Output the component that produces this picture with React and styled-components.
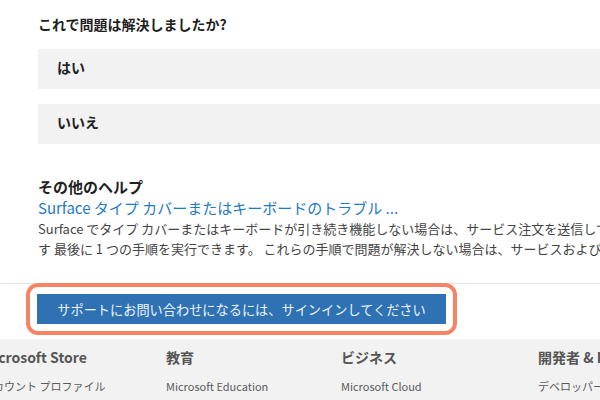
import styled, { createGlobalStyle } from "styled-components"

const GlobalStyle = createGlobalStyle`
  html, body {
    margin: 0;
    padding: 0;
    width: 600px;
    height: 400px;
    overflow: hidden;
    background: #ffffff;
    font-family: "Noto Sans CJK JP", "Noto Sans", sans-serif;
  }
`

const feedbackOptions = ["はい", "いいえ"]

const footerColumns = [
  { title: "Microsoft Store", link: "アカウント プロファイル" },
  { title: "教育", link: "Microsoft Education" },
  { title: "ビジネス", link: "Microsoft Cloud" },
  { title: "開発者 & IT", link: "デベロッパー センター" },
]

export default function App() {
  return (
    <Page>
      <GlobalStyle />
      <Content>
        <Question>これで問題は解決しましたか?</Question>
        <Options>
          {feedbackOptions.map((opt) => (
            <OptionBox key={opt}>{opt}</OptionBox>
          ))}
        </Options>
        <HelpSection>
          <HelpTitle>その他のヘルプ</HelpTitle>
          <HelpLink>Surface タイプ カバーまたはキーボードのトラブル ...</HelpLink>
          <HelpText>
            Surface でタイプ カバーまたはキーボードが引き続き機能しない場合は、サービス注文を送信してください。
          </HelpText>
          <HelpText>
            す 最後に 1 つの手順を実行できます。 これらの手順で問題が解決しない場合は、サービスおよび修理
          </HelpText>
        </HelpSection>
      </Content>
      <Divider />
      <ButtonRow>
        <Highlight>
          <SignInButton>サポートにお問い合わせになるには、サインインしてください</SignInButton>
        </Highlight>
      </ButtonRow>
      <Footer>
        {footerColumns.map((col) => (
          <FooterColumn key={col.title}>
            <FooterTitle>{col.title}</FooterTitle>
            <FooterLink>{col.link}</FooterLink>
          </FooterColumn>
        ))}
      </Footer>
    </Page>
  )
}

const Page = styled.div`
  width: 600px;
  height: 400px;
  overflow: hidden;
  display: flex;
  flex-direction: column;
`
const Content = styled.div`
  padding: 14px 0 0 38px;
  display: flex;
  flex-direction: column;
`
const Question = styled.div`
  font-size: 14px;
  font-weight: 700;
  line-height: 20px;
  color: #1f1f1f;
  white-space: nowrap;
`
const Options = styled.div`
  margin-top: 15px;
  display: flex;
  flex-direction: column;
  gap: 15px;
`
const OptionBox = styled.div`
  height: 40px;
  box-sizing: border-box;
  padding: 0 0 4px 19px;
  display: flex;
  align-items: center;
  background: #f2f2f2;
  font-size: 14px;
  font-weight: 700;
  color: #1f1f1f;
`
const HelpSection = styled.div`
  margin-top: 33px;
  display: flex;
  flex-direction: column;
  white-space: nowrap;
`
const HelpTitle = styled.div`
  font-size: 15px;
  font-weight: 700;
  line-height: 20px;
  color: #1f1f1f;
`
const HelpLink = styled.div`
  font-size: 15px;
  line-height: 22px;
  color: #1f7ac6;
`
const HelpText = styled.div`
  font-size: 13px;
  line-height: 20px;
  color: #444444;
`
const Divider = styled.div`
  margin-top: 24px;
  height: 1px;
  background: #e3e3e3;
`
const ButtonRow = styled.div`
  padding: 0 0 0 26px;
  display: flex;
`
const Highlight = styled.div`
  padding: 7px 7px;
  border: 4px solid #f68464;
  border-radius: 12px;
  margin-top: -1px;
`
const SignInButton = styled.div`
  width: 409px;
  height: 30px;
  display: flex;
  align-items: center;
  justify-content: center;
  background: #2f72b4;
  color: #eef3f9;
  font-size: 13.2px;
  white-space: nowrap;
`
const Footer = styled.div`
  margin-top: 4px;
  flex: 1;
  background: #f2f2f2;
  display: grid;
  grid-template-columns: 184px 175px 197px 1fr;
  margin-left: -18px;
  padding-top: 8px;
`
const FooterColumn = styled.div`
  display: flex;
  flex-direction: column;
  white-space: nowrap;
`
const FooterTitle = styled.div`
  font-size: 14px;
  font-weight: 700;
  line-height: 20px;
  color: #555555;
`
const FooterLink = styled.div`
  margin-top: 11px;
  font-size: 11px;
  line-height: 16px;
  color: #5a5a5a;
`
